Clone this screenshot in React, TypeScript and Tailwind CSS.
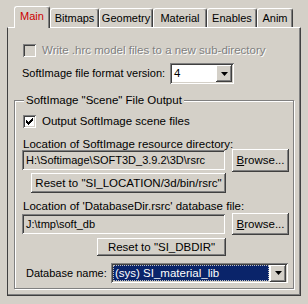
import React from "react";

const raised =
  "shadow-[inset_-1px_-1px_#404040,inset_1px_1px_#ffffff,inset_-2px_-2px_#808080,inset_2px_2px_#d4d0c8]";
const sunken =
  "shadow-[inset_1px_1px_#808080,inset_-1px_-1px_#ffffff,inset_2px_2px_#404040,inset_-2px_-2px_#d4d0c8]";

function Check({ checked, disabled }: { checked?: boolean; disabled?: boolean }) {
  return (
    <div
      className={`h-[13px] w-[13px] shrink-0 ${sunken} ${disabled ? "bg-[#d4d0c8]" : "bg-white"} flex items-center justify-center`}
    >
      {checked && (
        <svg width="7" height="7" viewBox="0 0 7 7">
          <path d="M0 2h1v1h1v1h1V3h1V2h1V1h1V0h1v3H6v1H5v1H4v1H3v1H2V6H1V5H0z" fill="#000" />
        </svg>
      )}
    </div>
  );
}

function Arrow() {
  return (
    <svg width="7" height="4" viewBox="0 0 7 4">
      <path d="M0 0h7L3.5 4z" fill="#000" />
    </svg>
  );
}

function DropButton() {
  return (
    <div className={`h-[17px] w-[16px] shrink-0 bg-[#d4d0c8] ${raised} flex items-center justify-center`}>
      <Arrow />
    </div>
  );
}

function Button({ children, className }: { children: React.ReactNode; className?: string }) {
  return (
    <div className={`bg-[#d4d0c8] ${raised} flex items-center justify-center text-black whitespace-nowrap ${className ?? ""}`}>
      {children}
    </div>
  );
}

function Field({ value }: { value: string }) {
  return (
    <div className={`h-[20px] w-[203px] mt-[1px] bg-[#d4d0c8] ${sunken} flex items-center pl-[4px] text-[11px] whitespace-nowrap overflow-hidden`}>
      {value}
    </div>
  );
}

const tabs = [
  { label: "Main", w: "w-[36px]" },
  { label: "Bitmaps", w: "w-[49px]" },
  { label: "Geometry", w: "w-[54px]" },
  { label: "Material", w: "w-[54px]" },
  { label: "Enables", w: "w-[50px]" },
  { label: "Anim", w: "w-[36px]" },
];

export default function App() {
  return (
    <div className="w-[308px] h-[304px] bg-[#d4d0c8] font-['Liberation_Sans',Arial,sans-serif] text-[11.5px] leading-[13px] text-black overflow-hidden select-none whitespace-nowrap">
      {/* Tabs */}
      <div className="flex items-end pl-[14px] pt-[5px] h-[27px] text-[11px]">
        {tabs.map((t, i) => {
          const active = i === 0;
          return (
            <div
              key={t.label}
              className={`${t.w} ${active ? "h-[22px] relative z-10 -mb-[1px] bg-[#d4d0c8] text-[#cc0000] pb-[2px]" : "h-[19px]"} rounded-t-[3px] border-t border-l border-white border-r border-r-[#404040] shadow-[inset_-1px_0_#808080] flex items-center justify-center`}
            >
              {t.label}
            </div>
          );
        })}
      </div>

      {/* Panel */}
      <div className="ml-[7px] w-[294px] h-[269px] border-t border-t-white border-l border-l-[#404040] border-r border-r-[#404040] border-b border-b-[#404040] shadow-[inset_-1px_-1px_#808080] flex flex-col">
        <div className="flex items-center h-[13px] mt-[16px] pl-[15px] gap-[6px]">
          <Check disabled />
          <span className="text-[#808080] [text-shadow:1px_1px_#ffffff]">
            Write .hrc model files to a new sub-directory
          </span>
        </div>

        <div className="flex items-center h-[21px] mt-[6px] pl-[14px]">
          <span className="w-[148px] shrink-0 text-[11px]">SoftImage file format version:</span>
          <div className={`w-[64px] h-[21px] bg-white ${sunken} flex items-center p-[2px]`}>
            <span className="flex-1 pl-[2px]">4</span>
            <DropButton />
          </div>
        </div>

        <fieldset className="ml-[6px] mt-[10px] w-[280px] h-[195px] border border-[#808080] shadow-[inset_1px_1px_#ffffff,1px_1px_#ffffff] flex flex-col">
          <legend className="ml-[9px] px-[2px] bg-[#d4d0c8] relative z-10">
            SoftImage "Scene" File Output
          </legend>

          <div className="flex items-center h-[13px] mt-[8px] pl-[8px] gap-[6px]">
            <Check checked />
            <span>Output SoftImage scene files</span>
          </div>

          <div className="mt-[10px] pl-[8px] h-[13px]">Location of SoftImage resource directory:</div>

          <div className="flex items-start mt-[-2px] pl-[7px] gap-[7px] h-[23px]">
            <Field value="H:\Softimage\SOFT3D_3.9.2\3D\rsrc" />
            <Button className="w-[57px] h-[23px]">
              <span>
                <span className="underline">B</span>rowse...
              </span>
            </Button>
          </div>

          <div className="pl-[16px] mt-[1px]">
            <Button className="w-[195px] h-[20px]">Reset to "SI_LOCATION/3d/bin/rsrc"</Button>
          </div>

          <div className="mt-[7px] pl-[8px] h-[13px]">Location of 'DatabaseDir.rsrc' database file:</div>

          <div className="flex items-start mt-[0px] pl-[7px] gap-[7px] h-[22px]">
            <Field value="J:\tmp\soft_db" />
            <Button className="w-[57px] h-[22px]">
              <span>
                <span className="underline">B</span>rowse...
              </span>
            </Button>
          </div>

          <div className="pl-[82px] mt-[3px]">
            <Button className="w-[129px] h-[18px]">Reset to "SI_DBDIR"</Button>
          </div>

          <div className="flex items-center h-[20px] mt-[7px] pl-[11px]">
            <span className="w-[85px] shrink-0 text-[11px]">Database name:</span>
            <div className={`w-[177px] h-[20px] bg-white ${sunken} flex items-center p-[2px]`}>
              <div className="flex-1 h-[16px] bg-[#0a246a] text-white border border-dotted border-[#c0c0c0] flex items-center pl-[1px] mr-[1px]">
                (sys) SI_material_lib
              </div>
              <DropButton />
            </div>
          </div>
        </fieldset>
      </div>
    </div>
  );
}
